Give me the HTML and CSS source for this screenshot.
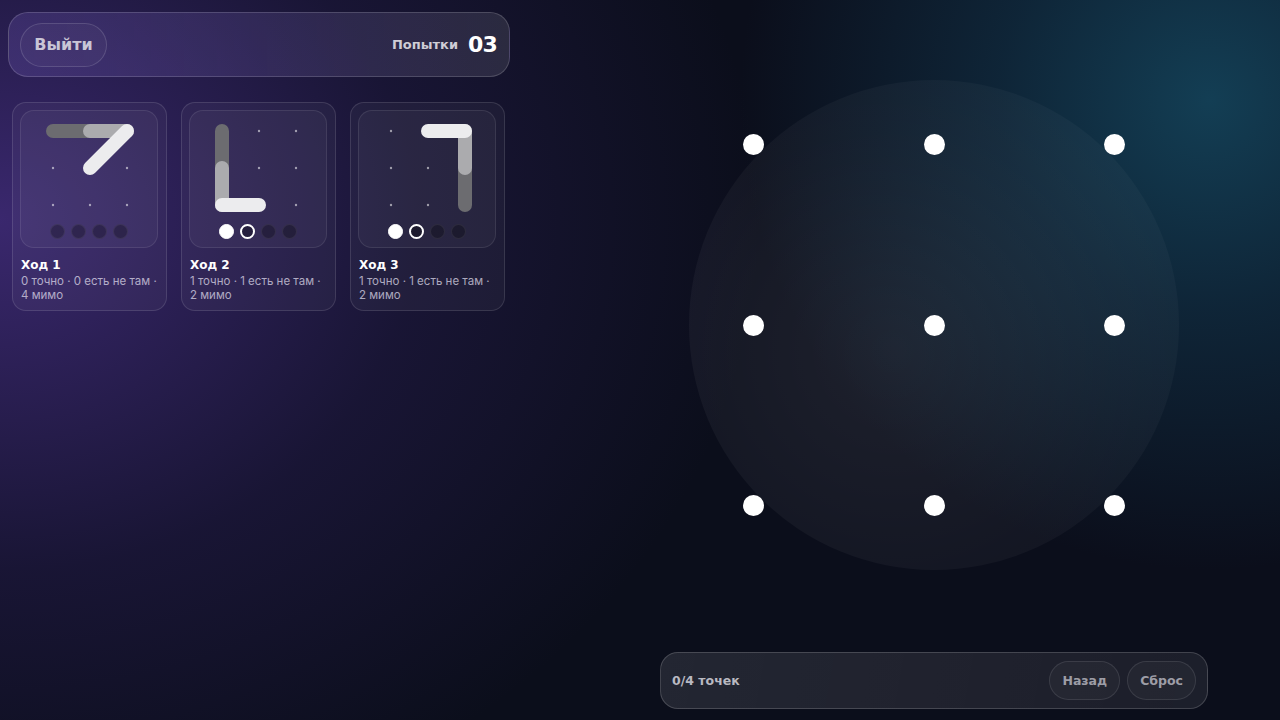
FILE: index.html
```html
<!DOCTYPE html>
<html lang="ru">
<head>
<meta charset="utf-8">
<title>Код</title>
<link rel="stylesheet" href="styles.css">
</head>
<body>
<div class="app">
  <section class="left">
    <header class="topbar">
      <button class="pill exit">Выйти</button>
      <div class="tries"><span class="tries-label">Попытки</span><span class="tries-num">03</span></div>
    </header>
    <div class="history">
      <article class="card">
        <div class="tile">
          <svg class="mini" viewBox="0 0 138 112" width="138" height="112">
            <g class="pts">
              <circle cx="33" cy="21" r="1.2"/><circle cx="70" cy="21" r="1.2"/><circle cx="107" cy="21" r="1.2"/>
              <circle cx="33" cy="58" r="1.2"/><circle cx="70" cy="58" r="1.2"/><circle cx="107" cy="58" r="1.2"/>
              <circle cx="33" cy="95" r="1.2"/><circle cx="70" cy="95" r="1.2"/><circle cx="107" cy="95" r="1.2"/>
            </g>
            <line class="s1" x1="33" y1="21" x2="70" y2="21"/>
            <line class="s2" x1="70" y1="21" x2="107" y2="21"/>
            <line class="s3" x1="107" y1="21" x2="70" y2="58"/>
          </svg>
          <div class="marks"><span class="mk"></span><span class="mk"></span><span class="mk"></span><span class="mk"></span></div>
        </div>
        <h3 class="move">Ход 1</h3>
        <p class="stats">0 точно · 0 есть не там · 4 мимо</p>
      </article>
      <article class="card">
        <div class="tile">
          <svg class="mini" viewBox="0 0 138 112" width="138" height="112">
            <g class="pts">
              <circle cx="33" cy="21" r="1.2"/><circle cx="70" cy="21" r="1.2"/><circle cx="107" cy="21" r="1.2"/>
              <circle cx="33" cy="58" r="1.2"/><circle cx="70" cy="58" r="1.2"/><circle cx="107" cy="58" r="1.2"/>
              <circle cx="33" cy="95" r="1.2"/><circle cx="70" cy="95" r="1.2"/><circle cx="107" cy="95" r="1.2"/>
            </g>
            <line class="s1" x1="33" y1="21" x2="33" y2="58"/>
            <line class="s2" x1="33" y1="58" x2="33" y2="95"/>
            <line class="s3" x1="33" y1="95" x2="70" y2="95"/>
          </svg>
          <div class="marks"><span class="mk full"></span><span class="mk ring"></span><span class="mk"></span><span class="mk"></span></div>
        </div>
        <h3 class="move">Ход 2</h3>
        <p class="stats">1 точно · 1 есть не там · 2 мимо</p>
      </article>
      <article class="card">
        <div class="tile">
          <svg class="mini" viewBox="0 0 138 112" width="138" height="112">
            <g class="pts">
              <circle cx="33" cy="21" r="1.2"/><circle cx="70" cy="21" r="1.2"/><circle cx="107" cy="21" r="1.2"/>
              <circle cx="33" cy="58" r="1.2"/><circle cx="70" cy="58" r="1.2"/><circle cx="107" cy="58" r="1.2"/>
              <circle cx="33" cy="95" r="1.2"/><circle cx="70" cy="95" r="1.2"/><circle cx="107" cy="95" r="1.2"/>
            </g>
            <line class="s1" x1="107" y1="95" x2="107" y2="58"/>
            <line class="s2" x1="107" y1="58" x2="107" y2="21"/>
            <line class="s3" x1="107" y1="21" x2="70" y2="21"/>
          </svg>
          <div class="marks"><span class="mk full"></span><span class="mk ring"></span><span class="mk"></span><span class="mk"></span></div>
        </div>
        <h3 class="move">Ход 3</h3>
        <p class="stats">1 точно · 1 есть не там · 2 мимо</p>
      </article>
    </div>
  </section>
  <section class="right">
    <div class="board">
      <div class="dots">
        <span class="dot"></span><span class="dot"></span><span class="dot"></span>
        <span class="dot"></span><span class="dot"></span><span class="dot"></span>
        <span class="dot"></span><span class="dot"></span><span class="dot"></span>
      </div>
    </div>
    <footer class="bottombar">
      <span class="count">0/4 точек</span>
      <div class="actions">
        <button class="pill small">Назад</button>
        <button class="pill small">Сброс</button>
      </div>
    </footer>
  </section>
</div>
</body>
</html>
```
FILE: styles.css
```css
* { box-sizing: border-box; }
html, body { margin: 0; height: 100%; }
body {
  width: 1280px;
  height: 720px;
  overflow: hidden;
  font-family: Inter, "Noto Sans", sans-serif;
  color: #fff;
  background:
    radial-gradient(circle 470px at 1210px 100px, rgba(19, 62, 84, 1), rgba(17, 52, 74, 0.6) 45%, rgba(15, 40, 60, 0) 100%),
    radial-gradient(ellipse 760px 640px at 0px 220px, rgba(66, 44, 124, 0.85), rgba(50, 34, 100, 0.35) 55%, rgba(40, 30, 80, 0) 100%),
    #0b0e1b;
}
.app {
  display: grid;
  grid-template-columns: 502px 1fr;
  column-gap: 86px;
  height: 720px;
  padding: 12px 8px 11px 8px;
}
.left { display: flex; flex-direction: column; }
.topbar {
  height: 65px;
  display: flex;
  align-items: center;
  justify-content: space-between;
  padding: 0 12px 0 11px;
  border-radius: 20px;
  border: 1px solid rgba(255, 255, 255, 0.16);
  background: linear-gradient(90deg, rgba(130, 105, 210, 0.22), rgba(150, 130, 220, 0.16) 50%, rgba(255, 255, 255, 0.1));
}
.pill {
  font-family: "DejaVu Sans", sans-serif;
  font-weight: 700;
  border-radius: 999px;
  border: 1px solid rgba(255, 255, 255, 0.14);
  background: rgba(255, 255, 255, 0.03);
  cursor: pointer;
}
.exit {
  height: 44px;
  width: 87px;
  font-size: 16px;
  color: #c9c5d6;
  padding: 0;
}
.tries { display: flex; align-items: center; gap: 10px; }
.tries-label {
  font-family: "DejaVu Sans", sans-serif;
  font-weight: 700;
  font-size: 13px;
  color: #cfcdd6;
}
.tries-num {
  font-family: "DejaVu Sans", sans-serif;
  font-weight: 700;
  font-size: 22px;
  color: #fff;
  letter-spacing: -0.8px;
}
.history {
  display: flex;
  gap: 14px;
  margin: 25px 4px 0;
}
.card {
  width: 155px;
  height: 209px;
  padding: 8px;
  border-radius: 14px;
  border: 1px solid rgba(255, 255, 255, 0.12);
  background: rgba(255, 255, 255, 0.04);
}
.tile {
  width: 138px;
  height: 138px;
  margin: -1px 0 0 -1px;
  border-radius: 14px;
  border: 1px solid rgba(255, 255, 255, 0.09);
  background: rgba(255, 255, 255, 0.04);
  display: flex;
  flex-direction: column;
  align-items: center;
}
.mini { display: block; margin: -1px 0 0 -1px; }
.pts circle { fill: rgba(255, 255, 255, 0.55); }
.mini line { stroke-width: 14; stroke-linecap: round; }
.s1 { stroke: #6c6c70; }
.s2 { stroke: #ababae; }
.s3 { stroke: #ececee; }
.marks { display: flex; gap: 6px; margin-top: 2px; }
.mk {
  width: 15px;
  height: 15px;
  border-radius: 50%;
  background: rgba(0, 0, 0, 0.28);
  border: 1px solid rgba(255, 255, 255, 0.07);
}
.mk.full { background: #fff; border-color: #fff; }
.mk.ring { background: rgba(0, 0, 0, 0.3); border: 2px solid #fff; }
.move {
  margin: 9px 0 0;
  font-family: "DejaVu Sans", sans-serif;
  font-weight: 700;
  font-size: 12px;
  line-height: 16px;
  color: #fff;
}
.stats {
  margin: 1px 0 0;
  font-size: 11.5px;
  line-height: 14px;
  color: rgba(228, 225, 242, 0.72);
}
.right {
  display: flex;
  flex-direction: column;
  align-items: center;
}
.board {
  width: 490px;
  height: 490px;
  margin-top: 68px;
  border-radius: 50%;
  background: radial-gradient(circle at 42% 55%, rgba(255, 255, 255, 0.08), rgba(255, 255, 255, 0.04) 55%, rgba(255, 255, 255, 0.022) 85%, rgba(255, 255, 255, 0.014) 100%);
  display: flex;
  align-items: center;
  justify-content: center;
}
.dots {
  width: 382px;
  height: 382px;
  display: grid;
  grid-template-columns: repeat(3, 21px);
  grid-template-rows: repeat(3, 21px);
  justify-content: space-between;
  align-content: space-between;
}
.dot { width: 21px; height: 21px; border-radius: 50%; background: #fff; }
.bottombar {
  margin-top: auto;
  width: 548px;
  height: 57px;
  display: flex;
  align-items: center;
  justify-content: space-between;
  padding: 0 11px 0 11px;
  border-radius: 18px;
  border: 1px solid rgba(255, 255, 255, 0.17);
  background: linear-gradient(100deg, rgba(255, 255, 255, 0.1), rgba(255, 255, 255, 0.07));
}
.count {
  font-family: "DejaVu Sans", sans-serif;
  font-weight: 700;
  font-size: 12.5px;
  color: #b9b9c1;
}
.actions { display: flex; gap: 7px; }
.small {
  height: 39px;
  padding: 0 12px;
  font-size: 12.5px;
  color: #9d9da6;
  border-color: rgba(255, 255, 255, 0.1);
}
```
